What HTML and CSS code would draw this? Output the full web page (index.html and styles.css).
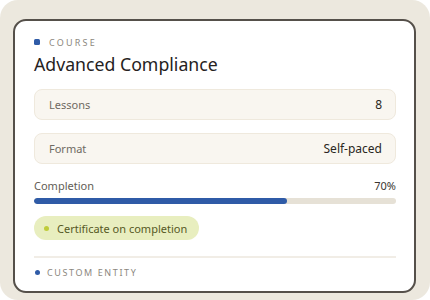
FILE: index.html
```html
<!DOCTYPE html>
<html>
<head>
<meta charset="utf-8">
<link rel="stylesheet" href="styles.css">
</head>
<body>
<div class="frame">
  <div class="card">
    <div class="eyebrow"><span class="sq"></span><span class="eyebrow-text">COURSE</span></div>
    <h1 class="title">Advanced Compliance</h1>
    <div class="rows">
      <div class="row"><span class="row-label">Lessons</span><span class="row-value">8</span></div>
      <div class="row"><span class="row-label">Format</span><span class="row-value">Self-paced</span></div>
    </div>
    <div class="progress">
      <div class="progress-head"><span class="progress-label">Completion</span><span class="progress-value">70%</span></div>
      <div class="track"><div class="fill" style="width:70%"></div></div>
    </div>
    <div class="pill"><span class="pill-dot"></span><span class="pill-text">Certificate on completion</span></div>
    <div class="footer"><span class="fdot"></span><span class="footer-text">CUSTOM ENTITY</span></div>
  </div>
</div>
</body>
</html>
```
FILE: styles.css
```css
html, body { margin: 0; padding: 0; background: #ffffff; }
body { font-family: "Noto Sans", "DejaVu Sans", sans-serif; }
.frame {
  width: 430px; height: 300px; box-sizing: border-box;
  background: #ece8de; border-radius: 18px;
  padding: 19px 14px 7px 13px;
}
.card {
  height: 100%; box-sizing: border-box;
  background: #ffffff; border: 2px solid #55504a; border-radius: 13px;
  padding: 14px 18px 0 19px;
  display: flex; flex-direction: column;
}
.eyebrow { display: flex; align-items: center; gap: 9px; height: 14px; }
.sq { width: 6px; height: 6px; background: #2f5ba7; border-radius: 1.5px; }
.eyebrow-text { font-size: 9px; letter-spacing: 2.2px; color: #8c877e; }
.title { margin: 3px 0 0; font-size: 17.7px; font-weight: 400; color: #25221e; line-height: 24px; }
.rows { display: flex; flex-direction: column; gap: 13px; margin-top: 13px; }
.row {
  display: flex; justify-content: space-between; align-items: center;
  height: 31px; box-sizing: border-box; padding: 0 13px 0 14px;
  background: #f9f6f0; border: 1px solid #efe9dd; border-radius: 8px;
}
.row-label { font-size: 11px; color: #6f6a62; }
.row-value { font-size: 12px; color: #2a2621; }
.progress { margin-top: 13px; }
.progress-head { display: flex; justify-content: space-between; align-items: center; height: 16px; }
.progress-label { font-size: 11px; color: #625d55; }
.progress-value { font-size: 11px; color: #3a3630; }
.track { margin-top: 5px; height: 6px; background: #e6e1d6; border-radius: 3px; overflow: hidden; }
.fill { height: 100%; background: #2f5ba7; border-radius: 3px; }
.pill {
  margin-top: 12px; align-self: flex-start;
  display: flex; align-items: center; gap: 8px;
  height: 24px; padding: 0 12px 0 10px;
  background: #e8eebf; border-radius: 12px;
}
.pill-dot { width: 5px; height: 5px; border-radius: 50%; background: #bfcc3a; }
.pill-text { font-size: 11px; color: #56591f; }
.footer {
  margin-top: 16px; border-top: 2px solid #f1ede6;
  display: flex; align-items: center; gap: 7px; padding-top: 6px; height: 16px;
}
.fdot { width: 5px; height: 5px; border-radius: 50%; background: #2f5ba7; margin-left: 1px; }
.footer-text { font-size: 9px; letter-spacing: 1.6px; color: #8c877e; }
```
